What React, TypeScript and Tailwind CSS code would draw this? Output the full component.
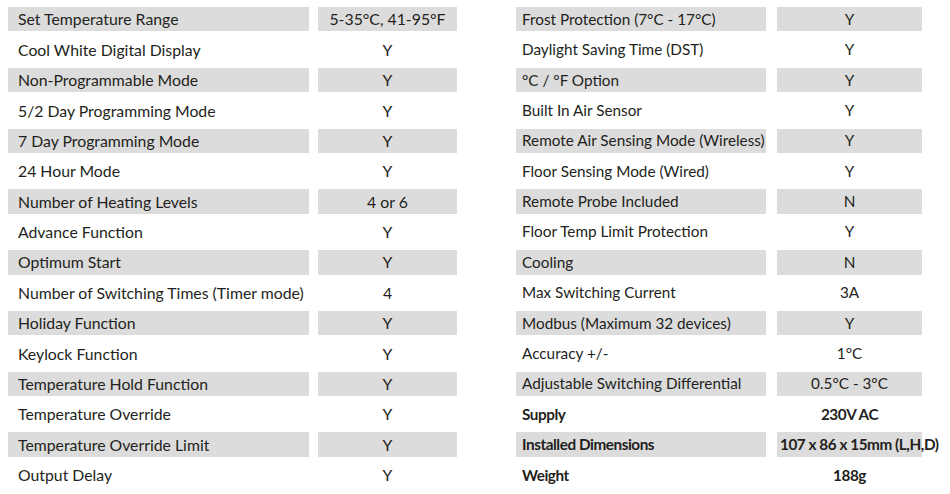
import React from "react";

type Row = { label: string; value: string; bold?: boolean; overflow?: boolean };

const left: Row[] = [
  { label: "Set Temperature Range", value: "5-35°C, 41-95°F" },
  { label: "Cool White Digital Display", value: "Y" },
  { label: "Non-Programmable Mode", value: "Y" },
  { label: "5/2 Day Programming Mode", value: "Y" },
  { label: "7 Day Programming Mode", value: "Y" },
  { label: "24 Hour Mode", value: "Y" },
  { label: "Number of Heating Levels", value: "4 or 6" },
  { label: "Advance Function", value: "Y" },
  { label: "Optimum Start", value: "Y" },
  { label: "Number of Switching Times (Timer mode)", value: "4" },
  { label: "Holiday Function", value: "Y" },
  { label: "Keylock Function", value: "Y" },
  { label: "Temperature Hold Function", value: "Y" },
  { label: "Temperature Override", value: "Y" },
  { label: "Temperature Override Limit", value: "Y" },
  { label: "Output Delay", value: "Y" },
];

const right: Row[] = [
  { label: "Frost Protection (7°C - 17°C)", value: "Y" },
  { label: "Daylight Saving Time (DST)", value: "Y" },
  { label: "°C / °F Option", value: "Y" },
  { label: "Built In Air Sensor", value: "Y" },
  { label: "Remote Air Sensing Mode (Wireless)", value: "Y" },
  { label: "Floor Sensing Mode (Wired)", value: "Y" },
  { label: "Remote Probe Included", value: "N" },
  { label: "Floor Temp Limit Protection", value: "Y" },
  { label: "Cooling", value: "N" },
  { label: "Max Switching Current", value: "3A" },
  { label: "Modbus (Maximum 32 devices)", value: "Y" },
  { label: "Accuracy +/-", value: "1°C" },
  { label: "Adjustable Switching Differential", value: "0.5°C - 3°C" },
  { label: "Supply", value: "230V AC", bold: true },
  { label: "Installed Dimensions", value: "107 x 86 x 15mm (L,H,D)", bold: true, overflow: true },
  { label: "Weight", value: "188g", bold: true },
];

function Table({
  rows,
  cols,
  gap,
  pad,
  size,
}: {
  rows: Row[];
  cols: string;
  gap: string;
  pad: string;
  size: string;
}) {
  return (
    <div className={`grid ${cols} ${gap} ${size} gap-y-[6px] auto-rows-[24.4px]`}>
      {rows.map((r, i) => {
        const bg = i % 2 === 0 ? "bg-[#dcdcdc]" : "";
        const weight = r.bold ? "font-bold tracking-[-0.45px]" : "";
        const align = r.overflow ? "justify-start pl-[3px]" : "justify-center";
        return (
          <React.Fragment key={i}>
            <div className={`${bg} ${pad} ${weight} flex items-center whitespace-nowrap`}>{r.label}</div>
            <div className={`${bg} ${weight} ${align} flex items-center whitespace-nowrap`}>{r.value}</div>
          </React.Fragment>
        );
      })}
    </div>
  );
}

export default function App() {
  return (
    <div
      className="w-[950px] h-[494px] bg-white text-[#231f20] flex pt-[7px] pl-[8px] overflow-hidden"
      style={{ fontFamily: "Lato, 'Liberation Sans', sans-serif" }}
    >
      <Table rows={left} cols="grid-cols-[301px_139px]" gap="gap-x-[9px]" pad="pl-[10px]" size="text-[15.8px]" />
      <div className="w-[59px] shrink-0" />
      <Table rows={right} cols="grid-cols-[250px_145px]" gap="gap-x-[11px]" pad="pl-[6px]" size="text-[15.3px]" />
    </div>
  );
}
